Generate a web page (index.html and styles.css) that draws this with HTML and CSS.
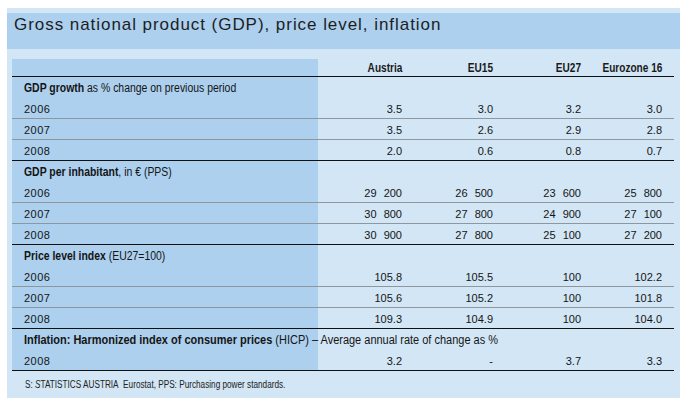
FILE: index.html
```html
<!DOCTYPE html>
<html>
<head>
<meta charset="utf-8">
<link rel="stylesheet" href="styles.css">
</head>
<body>
<div class="panel">
  <div class="title">Gross national product (GDP), price level, inflation</div>
  <table class="data">
    <colgroup>
      <col class="c-label"><col class="c1"><col class="c2"><col class="c3"><col class="c4">
    </colgroup>
    <thead>
      <tr><th></th><th><span class="cond-r">Austria</span></th><th><span class="cond-r">EU15</span></th><th><span class="cond-r">EU27</span></th><th class="last"><span class="cond-r">Eurozone 16</span></th></tr>
    </thead>
    <tbody>
      <tr class="sec"><td colspan="5"><span class="cond"><b>GDP growth</b> as % change on previous period</span></td></tr>
      <tr><td>2006</td><td>3.5</td><td>3.0</td><td>3.2</td><td class="last">3.0</td></tr>
      <tr><td>2007</td><td>3.5</td><td>2.6</td><td>2.9</td><td class="last">2.8</td></tr>
      <tr class="end"><td>2008</td><td>2.0</td><td>0.6</td><td>0.8</td><td class="last">0.7</td></tr>

      <tr class="sec"><td colspan="5"><span class="cond"><b>GDP per inhabitant</b>, in € (PPS)</span></td></tr>
      <tr><td>2006</td><td>29 200</td><td>26 500</td><td>23 600</td><td class="last">25 800</td></tr>
      <tr><td>2007</td><td>30 800</td><td>27 800</td><td>24 900</td><td class="last">27 100</td></tr>
      <tr class="end"><td>2008</td><td>30 900</td><td>27 800</td><td>25 100</td><td class="last">27 200</td></tr>

      <tr class="sec"><td colspan="5"><span class="cond"><b>Price level index</b> (EU27=100)</span></td></tr>
      <tr><td>2006</td><td>105.8</td><td>105.5</td><td>100</td><td class="last">102.2</td></tr>
      <tr><td>2007</td><td>105.6</td><td>105.2</td><td>100</td><td class="last">101.8</td></tr>
      <tr class="end"><td>2008</td><td>109.3</td><td>104.9</td><td>100</td><td class="last">104.0</td></tr>

      <tr class="sec"><td colspan="5"><span class="cond cond-wide"><b>Inflation: Harmonized index of consumer prices</b> (HICP) – Average annual rate of change as %</span></td></tr>
      <tr class="end"><td>2008</td><td>3.2</td><td>-</td><td>3.7</td><td class="last">3.3</td></tr>
    </tbody>
  </table>
  <div class="note"><span class="cond cond-note">S: <i>S</i>TATISTICS AUSTRIA&nbsp; Eurostat, PPS: Purchasing power standards.</span></div>
</div>
</body>
</html>
```
FILE: styles.css
```css
html, body {
  margin: 0;
  padding: 0;
  background: #ffffff;
}

body {
  padding: 8px 0 0 7px;
  font-family: "Liberation Sans", Arial, sans-serif;
  color: #1a1a1a;
}

.panel {
  box-sizing: border-box;
  width: 673px;
  height: 390px;
  padding-top: 5px;
  background: #d2e6f5;
}

.title {
  box-sizing: border-box;
  height: 36px;
  padding: 2px 0 0 7px;
  line-height: 20px;
  font-size: 17px;
  letter-spacing: 0.95px;
  background: #acd0ee;
  color: #1e1e1e;
}

.data {
  margin: 10px 0 0 5px;
  width: 662px;
  border-collapse: separate;
  border-spacing: 0;
  table-layout: fixed;
  background: linear-gradient(to right, #acd0ee 0, #acd0ee 306px, transparent 306px);
}

.c-label { width: 306px; }
.c1 { width: 84px; }
.c2 { width: 91px; }
.c3 { width: 88px; }
.c4 { width: 93px; }

.cond,
.cond-r {
  display: inline-block;
  white-space: nowrap;
  transform: scaleX(0.87);
  transform-origin: left center;
}

.cond-r {
  transform: scaleX(0.84);
  transform-origin: right center;
}

.cond-wide {
  transform: scaleX(0.915);
}

.cond-note {
  transform: scaleX(0.82);
}

.data th {
  padding: 2px 0 1px 0;
  line-height: 14px;
  font-size: 12px;
  font-weight: bold;
  text-align: right;
  border-bottom: 1px solid #111;
  color: #1a1a1a;
  white-space: nowrap;
}

.data td {
  padding: 3px 0 0 0;
  line-height: 17px;
  font-size: 11px;
  text-align: right;
  border-bottom: 1px solid #8e979e;
  white-space: nowrap;
  word-spacing: 4px;
  color: #151515;
}

.data td:first-child {
  text-align: left;
  padding-left: 12px;
  letter-spacing: 0.5px;
}

.data .last {
  padding-right: 12px;
}

.data tr.end td {
  border-bottom-color: #111;
}

.data tr.sec td {
  padding: 2px 0 0 12px;
  line-height: 19px;
  border-bottom: none;
  font-size: 12px;
  text-align: left;
  word-spacing: 0;
  letter-spacing: 0;
}

.data tr.sec b {
  font-weight: bold;
}

.note {
  margin-top: 7px;
  padding-left: 18px;
  line-height: 14px;
  font-size: 10px;
  color: #222;
}

.note i {
  font-style: italic;
}
```
